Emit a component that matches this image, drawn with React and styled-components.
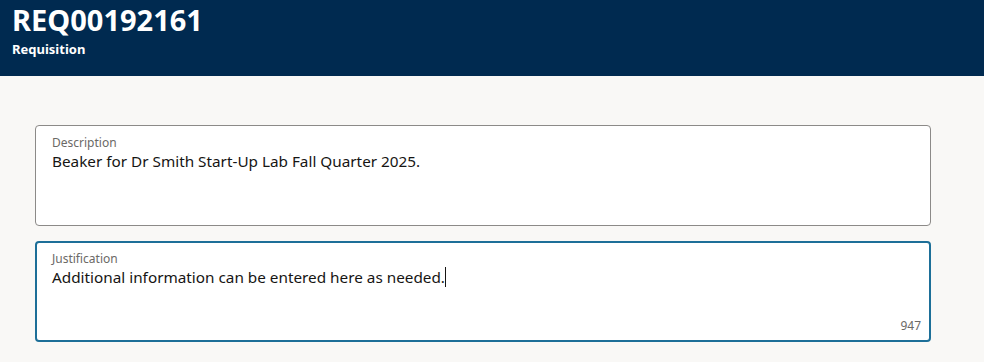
import React from 'react';
import styled, { createGlobalStyle } from 'styled-components';

const GlobalStyle = createGlobalStyle`
  html, body {
    margin: 0;
    padding: 0;
    background: #f9f8f6;
    font-family: 'Noto Sans', 'Open Sans', sans-serif;
  }
`;

const Header = styled.header`
  background: #002a50;
  color: #fff;
  height: 76px;
  box-sizing: border-box;
  padding: 2px 12px 0 12px;
`;

const Title = styled.h1`
  margin: 0;
  font-size: 29px;
  font-weight: 700;
  line-height: 36px;
`;

const Subtitle = styled.div`
  font-size: 13px;
  font-weight: 700;
  line-height: 18px;
  margin-top: 2px;
`;

const Main = styled.main`
  padding: 49px 53px 0 35px;
  display: flex;
  flex-direction: column;
  gap: 15px;
`;

const Field = styled.div`
  position: relative;
  background: #fff;
  height: 101px;
  box-sizing: border-box;
  border-radius: 4px;
  border: ${(p) => (p.focused ? '2px solid #1d6f98' : '1px solid #8c8a88')};
  padding: ${(p) => (p.focused ? '8px 15px' : '9px 16px')};
  display: flex;
  flex-direction: column;
`;

const Label = styled.label`
  font-size: 12px;
  color: #6b6966;
  line-height: 16px;
`;

const Value = styled.div`
  font-size: 15.3px;
  color: #161513;
  line-height: 20px;
`;

const Caret = styled.span`
  display: inline-block;
  width: 1px;
  height: 20px;
  background: #161513;
  vertical-align: -4px;
`;

const Counter = styled.span`
  position: absolute;
  right: 8px;
  bottom: 6px;
  font-size: 12px;
  color: #6b6966;
`;

export default function App() {
  return (
    <>
      <GlobalStyle />
      <Header>
        <Title>REQ00192161</Title>
        <Subtitle>Requisition</Subtitle>
      </Header>
      <Main>
        <Field>
          <Label>Description</Label>
          <Value>Beaker for Dr Smith Start-Up Lab Fall Quarter 2025.</Value>
        </Field>
        <Field focused>
          <Label>Justification</Label>
          <Value>
            Additional information can be entered here as needed.
            <Caret />
          </Value>
          <Counter>947</Counter>
        </Field>
      </Main>
    </>
  );
}
